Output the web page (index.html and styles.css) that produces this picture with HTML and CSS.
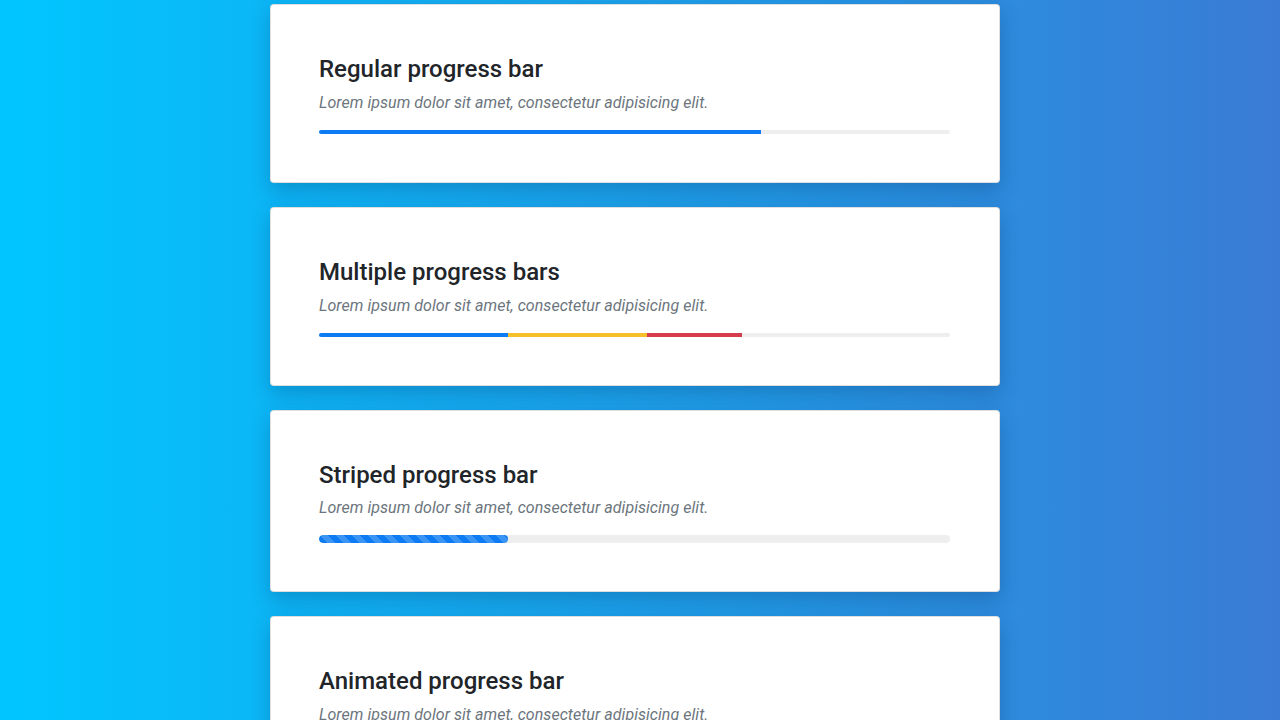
FILE: index.html
```html
<!DOCTYPE html>
<html lang="en">

<head>
	<meta charset="UTF-8">
	<meta name="viewport" content="width=device-width, initial-scale=1.0">
	<title>Progress bars</title>
	<link rel="stylesheet" href="styles.css">
</head>

<body>
	<div class="container">
		<div class="card">
			<h2>Regular progress bar</h2>
			<p>Lorem ipsum dolor sit amet, consectetur adipisicing elit.</p>
			<div class="progress">
				<div class="bar bar-blue" style="width: 70%"></div>
			</div>
		</div>

		<div class="card">
			<h2>Multiple progress bars</h2>
			<p>Lorem ipsum dolor sit amet, consectetur adipisicing elit.</p>
			<div class="progress">
				<div class="bar bar-blue" style="width: 30%"></div>
				<div class="bar bar-yellow" style="width: 22%"></div>
				<div class="bar bar-red" style="width: 15%"></div>
			</div>
		</div>

		<div class="card">
			<h2>Striped progress bar</h2>
			<p>Lorem ipsum dolor sit amet, consectetur adipisicing elit.</p>
			<div class="progress progress-lg">
				<div class="bar bar-blue bar-striped" style="width: 30%"></div>
			</div>
		</div>

		<div class="card">
			<h2>Animated progress bar</h2>
			<p>Lorem ipsum dolor sit amet, consectetur adipisicing elit.</p>
			<div class="progress progress-lg">
				<div class="bar bar-blue bar-striped" style="width: 50%"></div>
			</div>
		</div>
	</div>
</body>

</html>
```

FILE: styles.css
```css
body {
	margin: 0;
	height: 100vh;
	overflow: hidden;
	background: linear-gradient(to right, #00c6ff, #3a7bd5);
	font-family: Roboto, "Liberation Sans", sans-serif;
	color: #212529;
}

.container {
	width: 730px;
	margin-left: calc(50% - 370px);
	padding-top: 4px;
	display: flex;
	flex-direction: column;
	gap: 24px;
}

.card {
	background: #fff;
	border: 1px solid rgba(0, 0, 0, 0.125);
	border-radius: 4px;
	padding: 50px 49px 48px 48px;
	box-shadow: 0 8px 20px rgba(0, 40, 90, 0.25);
}

.card h2 {
	margin: 0 0 7px;
	font-size: 24px;
	font-weight: 500;
	line-height: 1.2;
}

.card p {
	margin: 0 0 15px;
	font-size: 16px;
	font-style: italic;
	color: #6c757d;
	line-height: 1.5;
	letter-spacing: 0.05px;
}

.progress {
	display: flex;
	height: 4px;
	background: #eeeeee;
	border-radius: 4px;
	overflow: hidden;
}

.progress-lg {
	height: 8px;
}

.bar {
	height: 100%;
}

.bar-blue {
	background-color: #0d7cf2;
}

.bar-yellow {
	background-color: #f6c02c;
}

.bar-red {
	background-color: #d63c4c;
}

.progress-lg .bar {
	border-radius: 4px;
}

.bar-striped {
	background-image: linear-gradient(45deg, rgba(255, 255, 255, 0.18) 25%, transparent 25%, transparent 50%, rgba(255, 255, 255, 0.18) 50%, rgba(255, 255, 255, 0.18) 75%, transparent 75%, transparent);
	background-size: 16px 16px;
}
```
